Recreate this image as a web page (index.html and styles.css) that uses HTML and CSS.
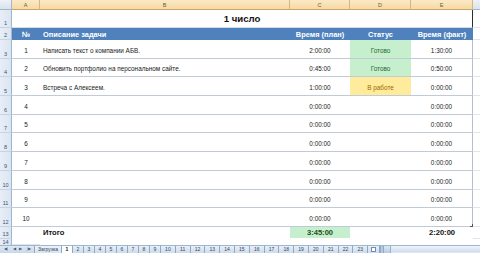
FILE: index.html
```html
<!DOCTYPE html>
<html lang="ru">
<head>
<meta charset="utf-8">
<title>1 число</title>
<link rel="stylesheet" href="styles.css">
</head>
<body>
<div class="sheet">
  <div class="row colheads">
    <div class="corner"></div>
    <div class="ch">A</div>
    <div class="ch">B</div>
    <div class="ch">C</div>
    <div class="ch">D</div>
    <div class="ch">E</div>
    <div class="ch fill"></div>
  </div>

  <div class="row r-title">
    <div class="rh">1</div>
    <div class="title">1 число</div>
    <div class="pad"></div>
  </div>

  <div class="row r-head">
    <div class="rh">2</div>
    <div class="hc center">№</div>
    <div class="hc">Описание задачи</div>
    <div class="hc center">Время (план)</div>
    <div class="hc center">Статус</div>
    <div class="hc center">Время (факт)</div>
    <div class="pad"></div>
  </div>

  <div class="row r-data">
    <div class="rh">3</div>
    <div class="c center">1</div>
    <div class="c">Написать текст о компании АБВ.</div>
    <div class="c center">2:00:00</div>
    <div class="c center done">Готово</div>
    <div class="c center last">1:30:00</div>
    <div class="pad"></div>
  </div>
  <div class="row r-data">
    <div class="rh">4</div>
    <div class="c center">2</div>
    <div class="c">Обновить портфолио на персональном сайте.</div>
    <div class="c center">0:45:00</div>
    <div class="c center done">Готово</div>
    <div class="c center last">0:50:00</div>
    <div class="pad"></div>
  </div>
  <div class="row r-data">
    <div class="rh">5</div>
    <div class="c center">3</div>
    <div class="c">Встреча с Алексеем.</div>
    <div class="c center">1:00:00</div>
    <div class="c center work">В работе</div>
    <div class="c center last">0:00:00</div>
    <div class="pad"></div>
  </div>
  <div class="row r-data">
    <div class="rh">6</div>
    <div class="c center">4</div>
    <div class="c"></div>
    <div class="c center">0:00:00</div>
    <div class="c"></div>
    <div class="c center last">0:00:00</div>
    <div class="pad"></div>
  </div>
  <div class="row r-data">
    <div class="rh">7</div>
    <div class="c center">5</div>
    <div class="c"></div>
    <div class="c center">0:00:00</div>
    <div class="c"></div>
    <div class="c center last">0:00:00</div>
    <div class="pad"></div>
  </div>
  <div class="row r-data">
    <div class="rh">8</div>
    <div class="c center">6</div>
    <div class="c"></div>
    <div class="c center">0:00:00</div>
    <div class="c"></div>
    <div class="c center last">0:00:00</div>
    <div class="pad"></div>
  </div>
  <div class="row r-data">
    <div class="rh">9</div>
    <div class="c center">7</div>
    <div class="c"></div>
    <div class="c center">0:00:00</div>
    <div class="c"></div>
    <div class="c center last">0:00:00</div>
    <div class="pad"></div>
  </div>
  <div class="row r-data">
    <div class="rh">10</div>
    <div class="c center">8</div>
    <div class="c"></div>
    <div class="c center">0:00:00</div>
    <div class="c"></div>
    <div class="c center last">0:00:00</div>
    <div class="pad"></div>
  </div>
  <div class="row r-data">
    <div class="rh">11</div>
    <div class="c center">9</div>
    <div class="c"></div>
    <div class="c center">0:00:00</div>
    <div class="c"></div>
    <div class="c center last">0:00:00</div>
    <div class="pad"></div>
  </div>
  <div class="row r-data">
    <div class="rh">12</div>
    <div class="c center">10</div>
    <div class="c"></div>
    <div class="c center">0:00:00</div>
    <div class="c"></div>
    <div class="c center last">0:00:00<span class="handle"></span></div>
    <div class="pad"></div>
  </div>

  <div class="row r-total">
    <div class="rh">13</div>
    <div class="t"></div>
    <div class="t b">Итого</div>
    <div class="t center b sum">3:45:00</div>
    <div class="t"></div>
    <div class="t center b">2:20:00</div>
    <div class="pad"></div>
  </div>
  <div class="row r-cut">
    <div class="rh">14</div>
    <div class="pad"></div>
  </div>

  <div class="tabbar">
    <div class="nav">
      <span class="arr">&#9664;&#9474;</span>
      <span class="arr">&#9664;</span>
      <span class="arr">&#9654;</span>
      <span class="arr">&#9474;&#9654;</span>
    </div>
    <div class="tabs">
      <span class="tab wide">Загрузка</span>
      <span class="tab one active">1</span>
      <span class="tab one">2</span>
      <span class="tab one">3</span>
      <span class="tab one">4</span>
      <span class="tab one">5</span>
      <span class="tab one">6</span>
      <span class="tab one">7</span>
      <span class="tab one">8</span>
      <span class="tab one">9</span>
      <span class="tab two">10</span>
      <span class="tab two">11</span>
      <span class="tab two">12</span>
      <span class="tab two">13</span>
      <span class="tab two">14</span>
      <span class="tab two">15</span>
      <span class="tab two">16</span>
      <span class="tab two">17</span>
      <span class="tab two">18</span>
      <span class="tab two">19</span>
      <span class="tab two">20</span>
      <span class="tab two">21</span>
      <span class="tab two">22</span>
      <span class="tab two">23</span>
      <span class="tab newtab"><span class="newicon"></span></span>
    </div>
    <div class="split"></div>
    <div class="hscroll"><span class="sbtn"></span><span class="thumb"></span></div>
  </div>
</div>
</body>
</html>
```

FILE: styles.css
```css
* { box-sizing: border-box; }
html, body {
  margin: 0;
  padding: 0;
  width: 480px;
  height: 253px;
  overflow: hidden;
  background: #ffffff;
}
.sheet {
  width: 480px;
  height: 253px;
  display: flex;
  flex-direction: column;
  font-family: "Liberation Sans", Arial, sans-serif;
  font-size: 6.4px;
  color: #1a1a1a;
}
.row {
  display: grid;
  grid-template-columns: 12px 28px 250px 60px 61px 62px 7px;
  flex: none;
}
.center { justify-content: center; text-align: center; }
.b { font-weight: bold; }

/* column headers */
.colheads { height: 10px; }
.corner {
  background: linear-gradient(#eef2f7, #d9e1ec);
  border-right: 1px solid #9eb6ce;
  border-bottom: 1px solid #9eb6ce;
}
.ch {
  display: flex;
  align-items: center;
  justify-content: center;
  font-size: 5.5px;
  color: #6b5a3a;
  background: linear-gradient(#fbe9c8, #f6d9a2);
  border-right: 1px solid #d8b57a;
  border-bottom: 1px solid #c9a56a;
}
.ch.fill {
  background: linear-gradient(#eef2f7, #dde4ee);
  border-right: 0;
  border-bottom: 1px solid #9eb6ce;
}

/* row headers */
.rh {
  display: flex;
  align-items: flex-end;
  justify-content: center;
  padding-bottom: 1px;
  font-size: 5.5px;
  color: #3e5573;
  background: linear-gradient(90deg, #e8eef7, #dbe5f1);
  border-right: 1px solid #9eb6ce;
  border-bottom: 1px solid #c5d3e4;
  overflow: hidden;
}

/* title row */
.r-title { height: 18px; }
.title {
  grid-column: 2 / 7;
  display: flex;
  align-items: center;
  justify-content: center;
  font-size: 9.6px;
  font-weight: bold;
  color: #111;
  border-right: 1px solid #2d2d2d;
  border-bottom: 1px solid #d4dbe4;
}
.pad { border-bottom: 1px solid #e2e6ec; }

/* header row */
.r-head { height: 12px; }
.hc {
  display: flex;
  align-items: center;
  padding-left: 3px;
  background: #4f81bd;
  color: #ffffff;
  font-weight: bold;
  font-size: 7.4px;
}
.hc.center { padding-left: 0; }

/* data rows */
.r-data { height: 18.7px; }
.c {
  display: flex;
  align-items: flex-end;
  padding: 0 0 4px 3px;
  border-bottom: 1px solid #c2cad6;
  white-space: nowrap;
  overflow: visible;
}
.c.center { padding-left: 0; }
.c.last { border-right: 1px solid #b5bfcc; position: relative; }
.done { background: #c6efce; color: #1f6b32; }
.work { background: #ffeb9c; color: #9c6a00; }
.handle {
  position: absolute;
  right: -1px;
  bottom: -1px;
  width: 3px;
  height: 3px;
  border-right: 1px solid #555;
  border-bottom: 1px solid #555;
}

/* total row */
.r-total { height: 12px; }
.t {
  display: flex;
  align-items: center;
  padding-left: 3px;
  font-size: 7.6px;
  color: #111;
}
.t.center { padding-left: 0; }
.sum { background: #c6efce; color: #1d4f1d; margin-bottom: 1px; }
.r-cut { height: 6px; }
.r-cut .rh { align-items: flex-start; padding-top: 0; border-bottom: 0; }

/* sheet tabs */
.tabbar {
  flex: none;
  height: 8px;
  display: flex;
  align-items: stretch;
  background: linear-gradient(#dfe8f3, #c9d8ea);
  border-top: 1px solid #9eb6ce;
  font-size: 5px;
  color: #2f4460;
}
.nav {
  width: 34px;
  display: flex;
  align-items: center;
  justify-content: space-around;
  padding: 0 2px;
  font-size: 3.5px;
  color: #3e5c82;
}
.arr { letter-spacing: -1px; }
.tabs {
  display: flex;
  align-items: stretch;
}
.tab {
  display: flex;
  align-items: center;
  justify-content: center;
  background: linear-gradient(#e8eff8, #cddbec);
  border-right: 1px solid #8fa8c6;
  white-space: nowrap;
}
.tab.wide { width: 28px; background: linear-gradient(#eef3f9, #d6e2f0); border-left: 1px solid #8fa8c6; }
.tab.one { width: 11px; }
.tab.two { width: 14.8px; }
.tab.active { background: #ffffff; font-weight: bold; color: #111; }
.tab.newtab { width: 12px; }
.newicon {
  width: 5px;
  height: 5px;
  background: #fff;
  border: 1px solid #6f8db3;
}
.split {
  width: 4px;
  background: #b9c9de;
  border-left: 1px solid #8fa8c6;
  border-right: 1px solid #8fa8c6;
}
.hscroll {
  flex: 1;
  display: flex;
  align-items: stretch;
  background: linear-gradient(#eef3f9, #dde7f3);
}
.sbtn {
  width: 7px;
  background: linear-gradient(#dbe6f3, #b8cde6);
  border-right: 1px solid #9ab1cd;
}
.thumb {
  flex: 1;
  margin: 1px 0;
  background: linear-gradient(#e9f0f9, #cfdcee);
}
```
